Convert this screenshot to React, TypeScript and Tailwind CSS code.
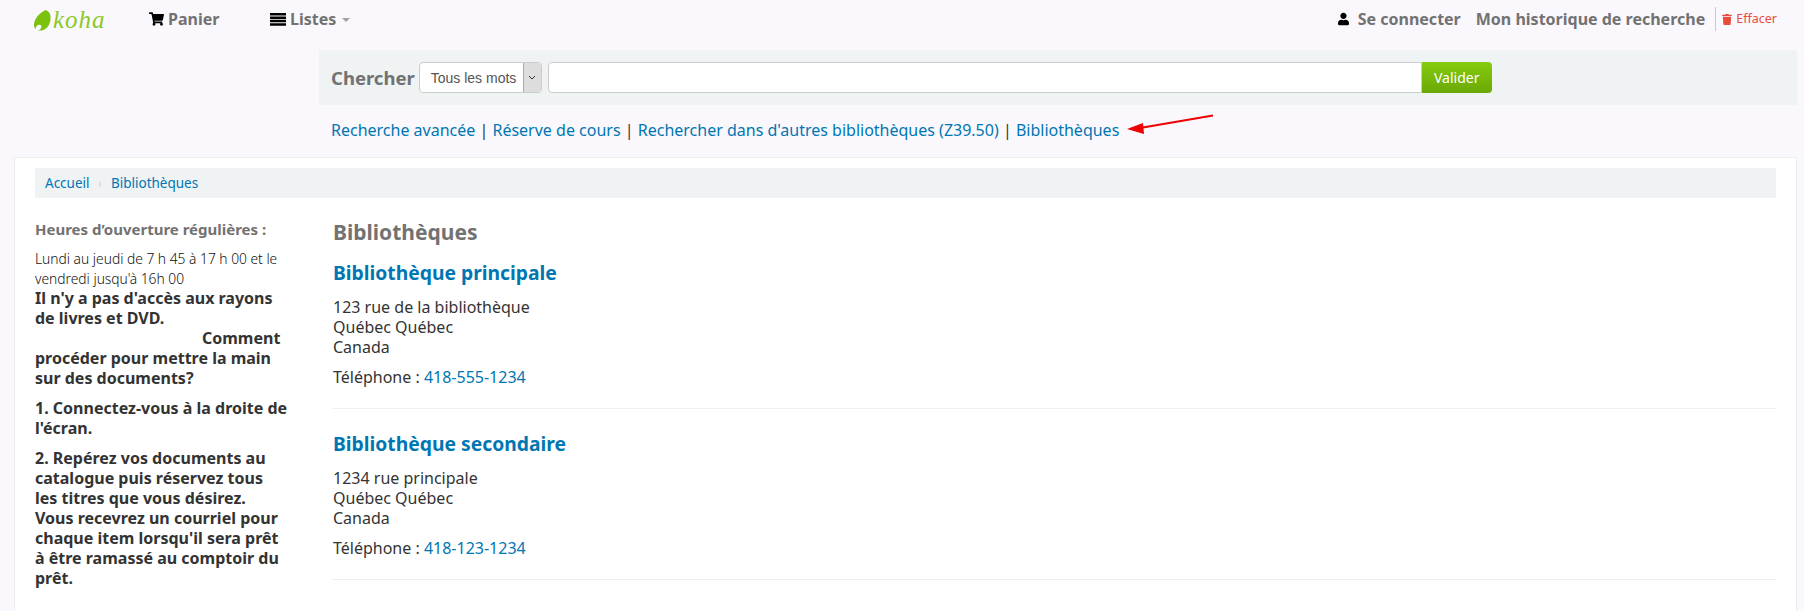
import React from 'react';
import { FaShoppingCart, FaUser, FaTrash } from 'react-icons/fa';

const Library = ({ name, street, phone }: { name: string; street: string; phone: string }) => (
  <div className="border-b border-[#eeeeee] pb-[21px] mb-[23px]">
    <h2 className="text-[19.3px] leading-[24px] font-bold text-[#0076b2] mb-[12px]">{name}</h2>
    <p className="mb-[10px]">
      {street}
      <br />
      Québec Québec
      <br />
      Canada
    </p>
    <p>
      Téléphone : <a className="text-[#0076b2]">{phone}</a>
    </p>
  </div>
);

const App: React.FC = () => {
  return (
    <div className="relative h-[611px] w-[1804px] overflow-hidden bg-[#faf8fd] text-[16px] leading-[20px] text-[#333] font-['Noto_Sans',sans-serif]">
      {/* Navbar */}
      <div className="flex items-center h-[38px] pl-[34px] pr-[27px]">
        <div className="flex items-center w-[115px] h-[24px]">
          <svg width="17" height="21" viewBox="0 0 17 21" className="mr-[2px] mt-[2px]">
            <path d="M11.5 0C15 1 17 4 16.5 9C16 15 12.5 20 7.5 20.5C3 21 0 18.5 0 15C0 11 3 4 11.5 0Z" fill="#7ac20e" />
            <path d="M1.5 19C2 15.5 4.5 14 6.5 15C8 15.8 7.5 18 6 19.5C4.5 21 2 21 1.5 19Z" fill="#faf8fd" />
          </svg>
          <span className="font-['Liberation_Serif',serif] italic text-[25px] leading-[24px] tracking-[1px] text-[#8ac926] mt-[2px]">koha</span>
        </div>
        <a className="flex items-center w-[121px] font-bold text-[#727272]">
          <FaShoppingCart className="w-[15px] h-[14px] text-black mr-[4px]" />
          Panier
        </a>
        <a className="flex items-center font-bold text-[#727272]">
          <svg width="16" height="14" viewBox="0 0 16 14" className="mr-[4px]">
            <path d="M0 1H16V3.5H0ZM0 4.4H16V6.9H0ZM0 7.8H16V10.3H0ZM0 11.2H16V13.7H0Z" fill="#000" />
          </svg>
          Listes
          <span className="ml-[6px] mt-[2px] border-x-[4px] border-x-transparent border-t-[4px] border-t-[#a0a0a0]" />
        </a>
        <div className="ml-auto flex items-center">
          <FaUser className="w-[11px] h-[14px] text-black mr-[9px]" />
          <a className="font-bold text-[#727272] mr-[15px]">Se connecter</a>
          <a className="font-bold text-[#727272] mr-[10px]">Mon historique de recherche</a>
          <div className="flex items-center h-[24px] border-l border-[#cccccc] pl-[6px] text-[12.5px] text-[#e74c3c]">
            <FaTrash className="w-[10px] h-[11px] mr-[4px]" />
            Effacer
          </div>
        </div>
      </div>

      {/* Search */}
      <div className="ml-[319px] mr-[7px] mt-[12px] h-[55px] bg-[#eff3f4] flex items-center pl-[12px]">
        <span className="text-[18.5px] font-bold text-[#727272] mr-[4px]">Chercher</span>
        <div className="flex items-stretch h-[31px] w-[123px] border border-[#cccccc] rounded-[4px] bg-white overflow-hidden font-['Liberation_Sans',sans-serif] text-[14px] text-[#555]">
          <span className="flex-1 flex items-center pl-[11px]">Tous les mots</span>
          <span className="w-[18px] flex items-center justify-center bg-[#dddddd] border-l border-[#aaaaaa]">
            <svg width="8" height="5" viewBox="0 0 8 5">
              <path d="M1 1L4 4L7 1" fill="none" stroke="#333" strokeWidth="1" />
            </svg>
          </span>
        </div>
        <div className="ml-[6px] w-[874px] h-[31px] border border-[#cccccc] rounded-l-[4px] bg-white" />
        <button className="w-[70px] h-[31px] rounded-r-[4px] bg-gradient-to-b from-[#86cc0e] to-[#6ba806] text-white text-[14px]">Valider</button>
      </div>

      {/* Links */}
      <div className="pl-[331px] h-[50px] mb-[2px] flex items-center">
        <div>
          <a className="text-[#0076b2]">Recherche avancée</a> | <a className="text-[#0076b2]">Réserve de cours</a> |{' '}
          <a className="text-[#0076b2]">Rechercher dans d'autres bibliothèques (Z39.50)</a> |{' '}
          <a className="text-[#0076b2]">Bibliothèques</a>
        </div>
      </div>

      {/* Arrow */}
      <svg className="absolute left-[1120px] top-[110px]" width="100" height="26" viewBox="0 0 100 26">
        <path d="M93 5.5L20 18" stroke="#ee0000" strokeWidth="2" fill="none" />
        <path d="M7 19L23 13L24 24Z" fill="#ee0000" />
      </svg>

      {/* Main card */}
      <div className="ml-[14px] mr-[7px] h-[500px] bg-white border border-[#eeeeee] px-[20px] pt-[10px]">
        <div className="h-[30px] bg-[#eff3f4] flex items-center pl-[10px] text-[13.5px] text-[#0076b2]">
          <a>Accueil</a>
          <span className="mx-[9px] text-[#cccccc] text-[11px]">›</span>
          <a>Bibliothèques</a>
        </div>
        <div className="flex mt-[22px]">
          <aside className="w-[298px] shrink-0 pr-[45px]">
            <h3 className="text-[15px] font-bold text-[#727272] mt-[-1px] mb-[10px]">Heures d’ouverture régulières :</h3>
            <p className="text-[13.8px] font-light text-[#111] mb-[-1px]">Lundi au jeudi de 7 h 45 à 17 h 00 et le vendredi jusqu'à 16h 00</p>
            <div className="font-bold">
              <p>Il n'y a pas d'accès aux rayons de livres et DVD.</p>
              <p className="pl-[167px]">Comment</p>
              <p className="mb-[10px]">procéder pour mettre la main sur des documents?</p>
              <p className="mb-[10px]">1. Connectez-vous à la droite de l'écran.</p>
              <p>2. Repérez vos documents au catalogue puis réservez tous les titres que vous désirez. Vous recevrez un courriel pour chaque item lorsqu'il sera prêt à être ramassé au comptoir du prêt.</p>
            </div>
          </aside>
          <main className="flex-1">
            <h1 className="text-[21px] leading-[24px] font-bold text-[#727272] mb-[17px]">Bibliothèques</h1>
            <Library name="Bibliothèque principale" street="123 rue de la bibliothèque" phone="418-555-1234" />
            <Library name="Bibliothèque secondaire" street="1234 rue principale" phone="418-123-1234" />
          </main>
        </div>
      </div>
    </div>
  );
};

export default App;
